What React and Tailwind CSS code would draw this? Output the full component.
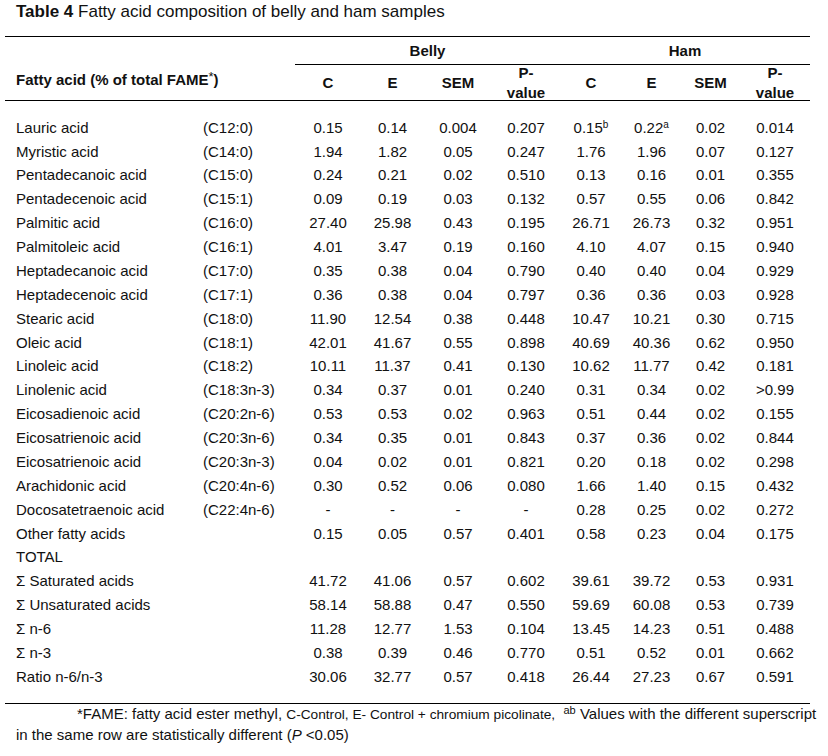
import React from "react";

const COLS =
  "grid grid-cols-[190px_100px_66px_63px_68px_68px_62px_59px_59px_70px]";

const rows = [
  ["Lauric acid", "(C12:0)", "0.15", "0.14", "0.004", "0.207", ["0.15", "b"], ["0.22", "a"], "0.02", "0.014"],
  ["Myristic acid", "(C14:0)", "1.94", "1.82", "0.05", "0.247", "1.76", "1.96", "0.07", "0.127"],
  ["Pentadecanoic acid", "(C15:0)", "0.24", "0.21", "0.02", "0.510", "0.13", "0.16", "0.01", "0.355"],
  ["Pentadecenoic acid", "(C15:1)", "0.09", "0.19", "0.03", "0.132", "0.57", "0.55", "0.06", "0.842"],
  ["Palmitic acid", "(C16:0)", "27.40", "25.98", "0.43", "0.195", "26.71", "26.73", "0.32", "0.951"],
  ["Palmitoleic acid", "(C16:1)", "4.01", "3.47", "0.19", "0.160", "4.10", "4.07", "0.15", "0.940"],
  ["Heptadecanoic acid", "(C17:0)", "0.35", "0.38", "0.04", "0.790", "0.40", "0.40", "0.04", "0.929"],
  ["Heptadecenoic acid", "(C17:1)", "0.36", "0.38", "0.04", "0.797", "0.36", "0.36", "0.03", "0.928"],
  ["Stearic acid", "(C18:0)", "11.90", "12.54", "0.38", "0.448", "10.47", "10.21", "0.30", "0.715"],
  ["Oleic acid", "(C18:1)", "42.01", "41.67", "0.55", "0.898", "40.69", "40.36", "0.62", "0.950"],
  ["Linoleic acid", "(C18:2)", "10.11", "11.37", "0.41", "0.130", "10.62", "11.77", "0.42", "0.181"],
  ["Linolenic acid", "(C18:3n-3)", "0.34", "0.37", "0.01", "0.240", "0.31", "0.34", "0.02", ">0.99"],
  ["Eicosadienoic acid", "(C20:2n-6)", "0.53", "0.53", "0.02", "0.963", "0.51", "0.44", "0.02", "0.155"],
  ["Eicosatrienoic acid", "(C20:3n-6)", "0.34", "0.35", "0.01", "0.843", "0.37", "0.36", "0.02", "0.844"],
  ["Eicosatrienoic acid", "(C20:3n-3)", "0.04", "0.02", "0.01", "0.821", "0.20", "0.18", "0.02", "0.298"],
  ["Arachidonic acid", "(C20:4n-6)", "0.30", "0.52", "0.06", "0.080", "1.66", "1.40", "0.15", "0.432"],
  ["Docosatetraenoic acid", "(C22:4n-6)", "-", "-", "-", "-", "0.28", "0.25", "0.02", "0.272"],
  ["Other fatty acids", "", "0.15", "0.05", "0.57", "0.401", "0.58", "0.23", "0.04", "0.175"],
  ["TOTAL", "", "", "", "", "", "", "", "", ""],
  ["Σ Saturated acids", "", "41.72", "41.06", "0.57", "0.602", "39.61", "39.72", "0.53", "0.931"],
  ["Σ Unsaturated acids", "", "58.14", "58.88", "0.47", "0.550", "59.69", "60.08", "0.53", "0.739"],
  ["Σ n-6", "", "11.28", "12.77", "1.53", "0.104", "13.45", "14.23", "0.51", "0.488"],
  ["Σ n-3", "", "0.38", "0.39", "0.46", "0.770", "0.51", "0.52", "0.01", "0.662"],
  ["Ratio n-6/n-3", "", "30.06", "32.77", "0.57", "0.418", "26.44", "27.23", "0.67", "0.591"],
];

function Val({ v }) {
  if (Array.isArray(v)) {
    return (
      <span>
        {v[0]}
        <sup className="text-[10px]">{v[1]}</sup>
      </span>
    );
  }
  return <span>{v}</span>;
}

function HeadCell({ children }) {
  return (
    <div className="flex items-center justify-center text-center font-bold leading-[20px]">
      {children}
    </div>
  );
}

export default function App() {
  return (
    <div className="w-[828px] h-[756px] bg-white text-[#111] font-['Liberation_Sans',Arial,sans-serif] overflow-hidden">
      <div className="h-[36px] pl-[16px] pt-[2px] text-[17px] leading-[20px] whitespace-nowrap">
        <span className="font-bold">Table 4</span> Fatty acid composition of belly and ham samples
      </div>

      <div className="ml-[5px] w-[805px] text-[15px]">
        {/* Header */}
        <div className="border-t border-b border-black grid grid-cols-[290px_66px_63px_68px_68px_62px_59px_59px_70px] grid-rows-[28px_35px]">
          <div className="row-span-2 flex items-end pb-[11px] pl-[11px] font-bold leading-[18px] whitespace-nowrap">
            Fatty acid (% of total FAME
            <span className="font-normal relative -top-[3px] text-[13px]">*</span>)
          </div>
          <div className="col-span-4 flex items-center justify-center font-bold border-b border-black pt-[2px]">
            Belly
          </div>
          <div className="col-span-4 flex items-center justify-center font-bold border-b border-black pt-[2px]">
            Ham
          </div>
          <HeadCell>C</HeadCell>
          <HeadCell>E</HeadCell>
          <HeadCell>SEM</HeadCell>
          <HeadCell>
            P-
            <br />
            value
          </HeadCell>
          <HeadCell>C</HeadCell>
          <HeadCell>E</HeadCell>
          <HeadCell>SEM</HeadCell>
          <HeadCell>
            P-
            <br />
            value
          </HeadCell>
        </div>

        {/* Body */}
        <div className={`${COLS} auto-rows-[23.875px] pt-[15px] pb-[14px] border-b border-black`}>
          {rows.map((r, i) => (
            <React.Fragment key={i}>
              <div className="flex items-center pl-[11px] whitespace-nowrap">{r[0]}</div>
              <div className="flex items-center pl-[8px] whitespace-nowrap">{r[1]}</div>
              {r.slice(2).map((v, j) => (
                <div key={j} className="flex items-center justify-center whitespace-nowrap">
                  <Val v={v} />
                </div>
              ))}
            </React.Fragment>
          ))}
        </div>
      </div>

      {/* Footer */}
      <div className="pl-[16px] text-[15px] leading-[20px] whitespace-nowrap">
        <div className="pl-[61px]">
          *FAME: fatty acid ester methyl,{" "}
          <span className="text-[13.7px]">C-Control, E- Control + chromium picolinate,</span>
          {"\u00a0\u00a0"}
          <sup className="text-[11px]">ab</sup> Values with the different superscript
        </div>
        <div>
          in the same row are statistically different (<span className="italic">P</span> &lt;0.05)
        </div>
      </div>
    </div>
  );
}
